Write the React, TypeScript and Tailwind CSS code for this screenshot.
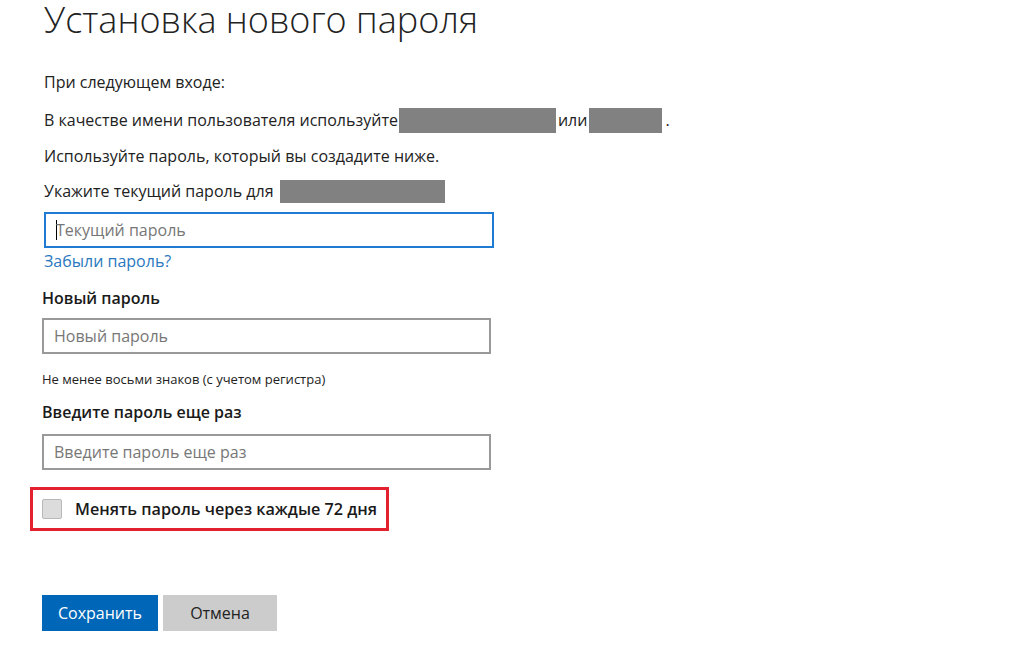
import React from "react";

const font = { fontFamily: '"Open Sans", "Noto Sans", sans-serif' };

export default function App() {
  return (
    <div className="w-[1024px] h-[648px] bg-white text-[#1a1a1a] overflow-hidden" style={font}>
      <div className="pl-[44px] pt-[2px]">
        <h1 className="text-[36px] font-light leading-[36px] text-[#222]">Установка нового пароля</h1>
        <div className="mt-[26px] flex flex-col text-[16px] text-[#222]">
          <p className="h-[38px] leading-[36px]">При следующем входе:</p>
          <p className="h-[36px] leading-[36px] flex items-center">
            <span>В качестве имени пользователя используйте</span>
            <span className="inline-block w-[157px] h-[25px] bg-[#818181] ml-[1px]" />
            <span className="mx-[2px]">или</span>
            <span className="inline-block w-[73px] h-[25px] bg-[#818181]" />
            <span className="ml-[3px]">.</span>
          </p>
          <p className="h-[35px] leading-[36px]">Используйте пароль, который вы создадите ниже.</p>
          <p className="h-[36px] leading-[36px] flex items-center">
            <span>Укажите текущий пароль для</span>
            <span className="inline-block w-[165px] h-[23px] bg-[#818181] ml-[7px]" />
          </p>
        </div>
        <div className="mt-[3px] w-[450px] h-[36px] border-2 border-[#1f7ad1] flex items-center pl-[10px] text-[16px] text-[#777]">
          <span className="w-[1px] h-[20px] bg-black mr-[-1px]" />
          <span>Текущий пароль</span>
        </div>
        <a className="block text-[16px] text-[#2a78c0] leading-[26px]">Забыли пароль?</a>
      </div>
      <div className="pl-[42px]">
        <div className="mt-[14px] text-[16px] font-semibold leading-[20px] text-[#1a1a1a]">Новый пароль</div>
        <div className="mt-[10px] w-[449px] h-[36px] border-2 border-[#999] flex items-center pl-[10px] text-[16px] text-[#777]">Новый пароль</div>
        <div className="mt-[17px] text-[13px] leading-[16px] text-[#222]">Не менее восьми знаков (с учетом регистра)</div>
        <div className="mt-[15px] text-[16px] font-semibold leading-[20px] text-[#1a1a1a]">Введите пароль еще раз</div>
        <div className="mt-[12px] w-[449px] h-[36px] border-2 border-[#999] flex items-center pl-[10px] text-[16px] text-[#777]">Введите пароль еще раз</div>
      </div>
      <div className="ml-[30px] mt-[17px] w-[359px] h-[44px] border-[3px] border-[#e3202d] flex items-center pl-[9px]">
        <span className="w-[20px] h-[20px] bg-[#dcdcdc] border border-[#b8b8b8] rounded-[2px]" />
        <span className="ml-[13px] text-[16.2px] font-semibold text-[#1a1a1a]">Менять пароль через каждые 72 дня</span>
      </div>
      <div className="pl-[42px] mt-[64px] flex gap-[5px]">
        <button className="w-[116px] h-[36px] bg-[#0067b8] text-white text-[16px]">Сохранить</button>
        <button className="w-[114px] h-[36px] bg-[#cccccc] text-[#222] text-[16px]">Отмена</button>
      </div>
    </div>
  );
}
